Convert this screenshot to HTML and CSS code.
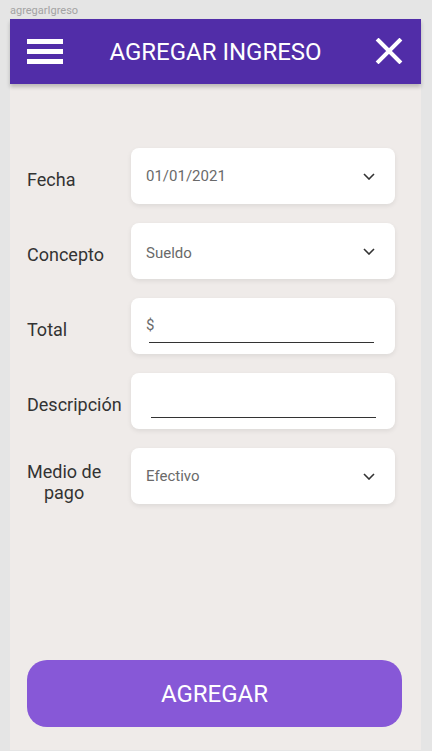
FILE: index.html
```html
<!DOCTYPE html>
<html lang="es">
<head>
<meta charset="utf-8">
<title>agregarIgreso</title>
<link rel="stylesheet" href="styles.css">
</head>
<body>
<div class="canvas-label">agregarIgreso</div>
<div class="frame">
  <header class="appbar">
    <div class="menu" aria-label="menu">
      <span></span><span></span><span></span>
    </div>
    <h1 class="title">AGREGAR INGRESO</h1>
    <svg class="close" width="28" height="26" viewBox="0 0 28 26" aria-label="cerrar">
      <path d="M3.5 2.5 L24.5 23.5 M24.5 2.5 L3.5 23.5" stroke="#fff" stroke-width="4" stroke-linecap="square" fill="none"/>
    </svg>
  </header>

  <main class="form">
    <div class="row">
      <div class="label">Fecha</div>
      <div class="card select">
        <span class="value">01/01/2021</span>
        <svg class="chev" width="12" height="7" viewBox="0 0 12 7"><path d="M1 1 L6 6 L11 1" stroke="#333" stroke-width="1.6" fill="none"/></svg>
      </div>
    </div>
    <div class="row">
      <div class="label">Concepto</div>
      <div class="card select">
        <span class="value low">Sueldo</span>
        <svg class="chev" width="12" height="7" viewBox="0 0 12 7"><path d="M1 1 L6 6 L11 1" stroke="#333" stroke-width="1.6" fill="none"/></svg>
      </div>
    </div>
    <div class="row">
      <div class="label">Total</div>
      <div class="card input total">
        <span class="value">$</span>
        <div class="line"></div>
      </div>
    </div>
    <div class="row">
      <div class="label">Descripción</div>
      <div class="card input desc">
        <div class="line"></div>
      </div>
    </div>
    <div class="row">
      <div class="label two"><span class="stack">Medio de<br>pago</span></div>
      <div class="card select">
        <span class="value">Efectivo</span>
        <svg class="chev" width="12" height="7" viewBox="0 0 12 7"><path d="M1 1 L6 6 L11 1" stroke="#333" stroke-width="1.6" fill="none"/></svg>
      </div>
    </div>
  </main>

  <button class="submit" type="button">AGREGAR</button>
</div>
</body>
</html>
```

FILE: styles.css
```css
* { box-sizing: border-box; }

html, body {
  margin: 0;
  padding: 0;
  background: #e5e5e5;
  font-family: Roboto, "Liberation Sans", sans-serif;
}

body {
  width: 432px;
  height: 751px;
  overflow: hidden;
}

.canvas-label {
  height: 19px;
  padding: 4px 0 0 10px;
  font-size: 11px;
  line-height: 13px;
  color: #a3a3a3;
}

.frame {
  margin-left: 10px;
  width: 411px;
  height: 731px;
  background: #efebe9;
  display: flex;
  flex-direction: column;
}

.appbar {
  height: 65px;
  flex: none;
  background: #512da8;
  display: flex;
  align-items: center;
  padding: 0 18px 0 17px;
  box-shadow: 0 3px 4px rgba(0, 0, 0, 0.22);
  position: relative;
  z-index: 1;
}

.menu {
  width: 36px;
  height: 25px;
  display: flex;
  flex-direction: column;
  justify-content: space-between;
  margin-top: -1px;
}

.menu span {
  display: block;
  height: 5px;
  background: #fff;
}

.title {
  flex: 1;
  margin: 0 0 0 -7px;
  text-align: center;
  color: #fff;
  font-weight: 400;
  font-size: 24px;
  line-height: 28px;
}

.close {
  display: block;
  margin-top: -1px;
}

.form {
  padding: 64px 0 0 17px;
  display: flex;
  flex-direction: column;
  gap: 19px;
}

.row {
  display: flex;
  align-items: center;
  height: 56px;
}

.label {
  width: 104px;
  flex: none;
  padding-top: 7px;
  font-size: 18px;
  line-height: 21px;
  color: #333;
}

.label.two { padding-top: 11px; }

.stack {
  display: inline-block;
  text-align: center;
}

.card {
  width: 264px;
  height: 56px;
  flex: none;
  background: #fff;
  border-radius: 8px;
  box-shadow: 0 2px 5px rgba(0, 0, 0, 0.08);
}

.select {
  display: flex;
  align-items: center;
  justify-content: space-between;
  padding: 0 20px 0 15px;
}

.value {
  font-size: 15px;
  line-height: 18px;
  color: #6a6a6a;
}

.value.low { padding-top: 4px; }

.chev { display: block; margin-top: 1px; }

.input { display: flex; flex-direction: column; }

.total { padding: 18px 21px 0 15px; }
.total .line { margin: 8px 0 0 3px; }

.desc { padding: 44px 19px 0 20px; }

.line {
  height: 0;
  border-top: 1px solid #333;
}

.submit {
  margin: auto 19px 23px 17px;
  height: 67px;
  border: 0;
  border-radius: 20px;
  background: #8758d7;
  color: #fff;
  font-family: Roboto, "Liberation Sans", sans-serif;
  font-size: 24px;
  font-weight: 400;
  padding: 0;
}
```
